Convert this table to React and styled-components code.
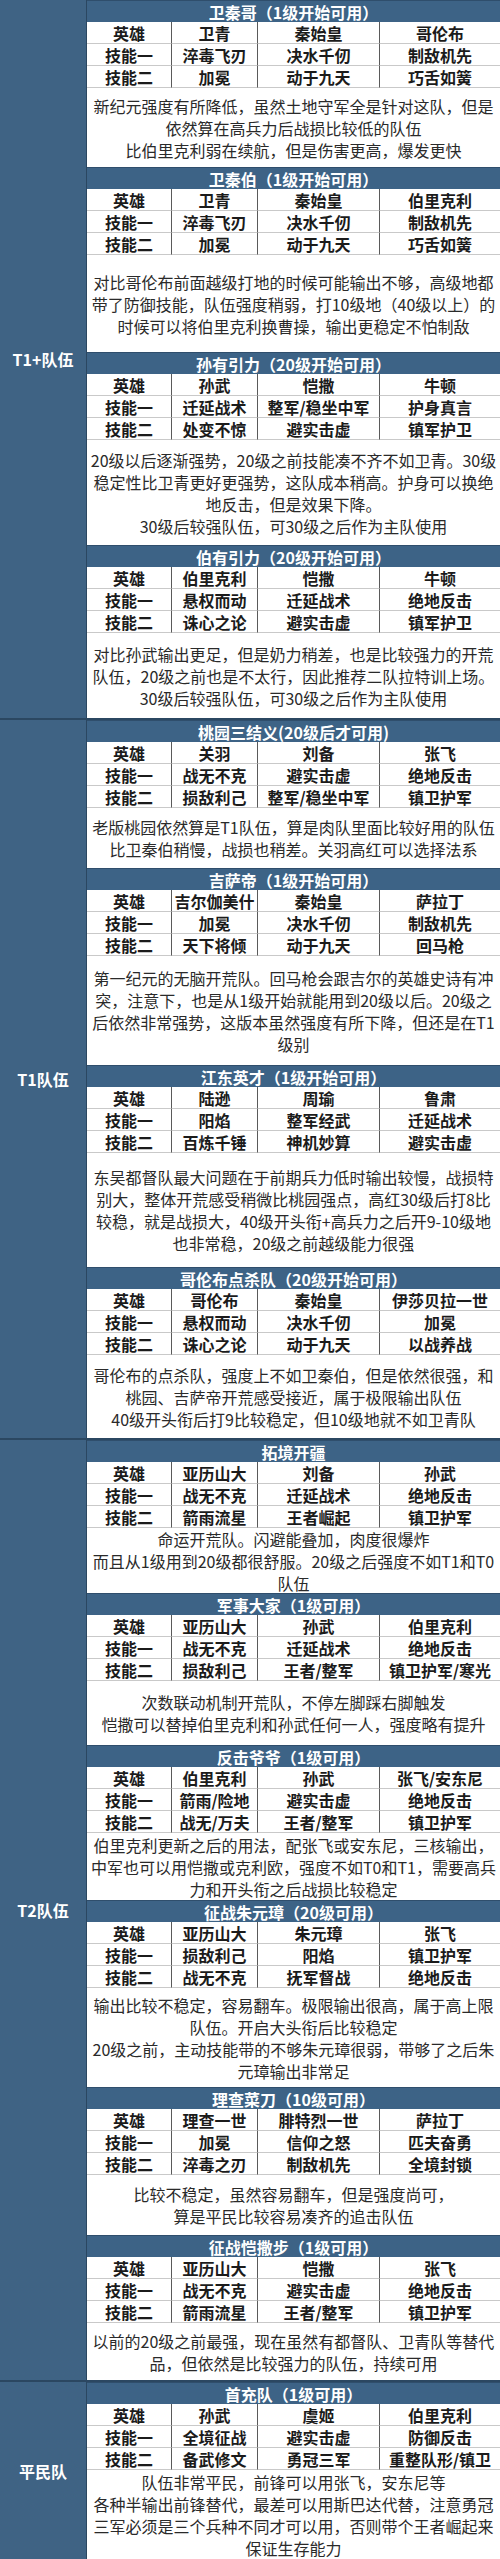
import React from 'react';
import styled, { createGlobalStyle } from 'styled-components';

const GlobalStyle = createGlobalStyle`
  *, *::before, *::after { box-sizing: border-box; }
  html, body { margin: 0; padding: 0; background: #ffffff; }
  body { font-family: "Noto Sans CJK SC", "Noto Sans", sans-serif; }
`;

const Page = styled.div`
  width: 500px;
  display: flex;
  flex-direction: column;
`;

const Group = styled.section`
  display: grid;
  grid-template-columns: 87px 1fr;
  border-top: ${(p) => (p.$first ? 'none' : '2px solid #2b4761')};
`;

const GroupLabel = styled.div`
  background: #3f6384;
  border-right: 1px solid #2b4761;
  color: #ffffff;
  font-weight: 700;
  font-size: 16px;
  line-height: 1;
  display: flex;
  align-items: center;
  justify-content: center;
  white-space: nowrap;
`;

const Blocks = styled.div`
  display: flex;
  flex-direction: column;
`;

const Block = styled.article`
  display: flex;
  flex-direction: column;
`;

const Title = styled.div`
  height: 22px;
  background: #3d6386;
  border-top: 1px solid #2f4e6c;
  color: #ffffff;
  font-weight: 700;
  font-size: 16px;
  line-height: 1;
  display: flex;
  align-items: center;
  justify-content: center;
  white-space: nowrap;
`;

const Table = styled.div`
  display: grid;
  grid-template-columns: 85px 86px 122px 120px;
  grid-auto-rows: 22px;
`;

const Cell = styled.div`
  display: flex;
  align-items: center;
  justify-content: center;
  background: #ffffff;
  color: #1b1b1b;
  font-weight: 700;
  font-size: 16px;
  line-height: 1;
  white-space: nowrap;
  border-bottom: 1px solid #c9c9c9;
  border-right: ${(p) => (p.$last ? 'none' : '1px solid #5a5a5a')};
`;

const Desc = styled.div`
  height: ${(p) => p.$h}px;
  background: #ffffff;
  display: flex;
  flex-direction: column;
  align-items: center;
  justify-content: center;
  color: #2a2a2a;
  font-size: 16px;
  line-height: 22px;
`;

const Line = styled.span`
  white-space: nowrap;
`;

const ROW_LABELS = ['英雄', '技能一', '技能二'];

const groups = [
  {
    label: 'T1+队伍',
    blocks: [
      {
        title: '卫秦哥（1级开始可用）',
        rows: [
          ['卫青', '秦始皇', '哥伦布'],
          ['淬毒飞刃', '决水千仞', '制敌机先'],
          ['加冕', '动于九天', '巧舌如簧'],
        ],
        h: 79,
        desc: [
          '新纪元强度有所降低，虽然土地守军全是针对这队，但是',
          '依然算在高兵力后战损比较低的队伍',
          '比伯里克利弱在续航，但是伤害更高，爆发更快',
        ],
      },
      {
        title: '卫秦伯（1级开始可用）',
        rows: [
          ['卫青', '秦始皇', '伯里克利'],
          ['淬毒飞刃', '决水千仞', '制敌机先'],
          ['加冕', '动于九天', '巧舌如簧'],
        ],
        h: 97,
        desc: [
          '对比哥伦布前面越级打地的时候可能输出不够，高级地都',
          '带了防御技能，队伍强度稍弱，打10级地（40级以上）的',
          '时候可以将伯里克利换曹操，输出更稳定不怕制敌',
        ],
      },
      {
        title: '孙有引力（20级开始可用）',
        rows: [
          ['孙武', '恺撒', '牛顿'],
          ['迁延战术', '整军/稳坐中军', '护身真言'],
          ['处变不惊', '避实击虚', '镇军护卫'],
        ],
        h: 105,
        desc: [
          '20级以后逐渐强势，20级之前技能凑不齐不如卫青。30级',
          '稳定性比卫青更好更强势，这队成本稍高。护身可以换绝',
          '地反击，但是效果下降。',
          '30级后较强队伍，可30级之后作为主队使用',
        ],
      },
      {
        title: '伯有引力（20级开始可用）',
        rows: [
          ['伯里克利', '恺撒', '牛顿'],
          ['悬权而动', '迁延战术', '绝地反击'],
          ['诛心之论', '避实击虚', '镇军护卫'],
        ],
        h: 85,
        desc: [
          '对比孙武输出更足，但是奶力稍差，也是比较强力的开荒',
          '队伍，20级之前也是不太行，因此推荐二队拉特训上场。',
          '30级后较强队伍，可30级之后作为主队使用',
        ],
      },
    ],
  },
  {
    label: 'T1队伍',
    blocks: [
      {
        title: '桃园三结义(20级后才可用)',
        rows: [
          ['关羽', '刘备', '张飞'],
          ['战无不克', '避实击虚', '绝地反击'],
          ['损敌利己', '整军/稳坐中军', '镇卫护军'],
        ],
        h: 60,
        desc: [
          '老版桃园依然算是T1队伍，算是肉队里面比较好用的队伍',
          '比卫秦伯稍慢，战损也稍差。关羽高红可以选择法系',
        ],
      },
      {
        title: '吉萨帝（1级开始可用）',
        rows: [
          ['吉尔伽美什', '秦始皇', '萨拉丁'],
          ['加冕', '决水千仞', '制敌机先'],
          ['天下将倾', '动于九天', '回马枪'],
        ],
        h: 109,
        desc: [
          '第一纪元的无脑开荒队。回马枪会跟吉尔的英雄史诗有冲',
          '突，注意下，也是从1级开始就能用到20级以后。20级之',
          '后依然非常强势，这版本虽然强度有所下降，但还是在T1',
          '级别',
        ],
      },
      {
        title: '江东英才（1级开始可用）',
        rows: [
          ['陆逊', '周瑜', '鲁肃'],
          ['阳焰', '整军经武', '迁延战术'],
          ['百炼千锤', '神机妙算', '避实击虚'],
        ],
        h: 114,
        desc: [
          '东吴都督队最大问题在于前期兵力低时输出较慢，战损特',
          '别大，整体开荒感受稍微比桃园强点，高红30级后打8比',
          '较稳，就是战损大，40级开头衔+高兵力之后开9-10级地',
          '也非常稳，20级之前越级能力很强',
        ],
      },
      {
        title: '哥伦布点杀队（20级开始可用）',
        rows: [
          ['哥伦布', '秦始皇', '伊莎贝拉一世'],
          ['悬权而动', '决水千仞', '加冕'],
          ['诛心之论', '动于九天', '以战养战'],
        ],
        h: 83,
        desc: [
          '哥伦布的点杀队，强度上不如卫秦伯，但是依然很强，和',
          '桃园、吉萨帝开荒感受接近，属于极限输出队伍',
          '40级开头衔后打9比较稳定，但10级地就不如卫青队',
        ],
      },
    ],
  },
  {
    label: 'T2队伍',
    blocks: [
      {
        title: '拓境开疆',
        rows: [
          ['亚历山大', '刘备', '孙武'],
          ['战无不克', '迁延战术', '绝地反击'],
          ['箭雨流星', '王者崛起', '镇卫护军'],
        ],
        h: 65,
        desc: [
          '命运开荒队。闪避能叠加，肉度很爆炸',
          '而且从1级用到20级都很舒服。20级之后强度不如T1和T0',
          '队伍',
        ],
      },
      {
        title: '军事大家（1级可用）',
        rows: [
          ['亚历山大', '孙武', '伯里克利'],
          ['战无不克', '迁延战术', '绝地反击'],
          ['损敌利己', '王者/整军', '镇卫护军/寒光'],
        ],
        h: 64,
        desc: [
          '次数联动机制开荒队，不停左脚踩右脚触发',
          '恺撒可以替掉伯里克利和孙武任何一人，强度略有提升',
        ],
      },
      {
        title: '反击爷爷（1级可用）',
        rows: [
          ['伯里克利', '孙武', '张飞/安东尼'],
          ['箭雨/险地', '避实击虚', '绝地反击'],
          ['战无/万夫', '王者/整军', '镇卫护军'],
        ],
        h: 67,
        desc: [
          '伯里克利更新之后的用法，配张飞或安东尼，三核输出，',
          '中军也可以用恺撒或克利欧，强度不如T0和T1，需要高兵',
          '力和开头衔之后战损比较稳定',
        ],
      },
      {
        title: '征战朱元璋（20级可用）',
        rows: [
          ['亚历山大', '朱元璋', '张飞'],
          ['损敌利己', '阳焰', '镇卫护军'],
          ['战无不克', '抚军督战', '绝地反击'],
        ],
        h: 99,
        desc: [
          '输出比较不稳定，容易翻车。极限输出很高，属于高上限',
          '队伍。开启大头衔后比较稳定',
          '20级之前，主动技能带的不够朱元璋很弱，带够了之后朱',
          '元璋输出非常足',
        ],
      },
      {
        title: '理查菜刀（10级可用）',
        rows: [
          ['理查一世', '腓特烈一世', '萨拉丁'],
          ['加冕', '信仰之怒', '匹夫奋勇'],
          ['淬毒之刃', '制敌机先', '全境封锁'],
        ],
        h: 60,
        desc: [
          '比较不稳定，虽然容易翻车，但是强度尚可，',
          '算是平民比较容易凑齐的追击队伍',
        ],
      },
      {
        title: '征战恺撒步（1级可用）',
        rows: [
          ['亚历山大', '恺撒', '张飞'],
          ['战无不克', '避实击虚', '绝地反击'],
          ['箭雨流星', '王者/整军', '镇卫护军'],
        ],
        h: 57,
        desc: [
          '以前的20级之前最强，现在虽然有都督队、卫青队等替代',
          '品，但依然是比较强力的队伍，持续可用',
        ],
      },
    ],
  },
  {
    label: '平民队',
    blocks: [
      {
        title: '首充队（1级可用）',
        rows: [
          ['孙武', '虞姬', '伯里克利'],
          ['全境征战', '避实击虚', '防御反击'],
          ['备武修文', '勇冠三军', '重整队形/镇卫'],
        ],
        h: 89,
        desc: [
          '队伍非常平民，前锋可以用张飞，安东尼等',
          '各种半输出前锋替代，最差可以用斯巴达代替，注意勇冠',
          '三军必须是三个兵种不同才可以用，否则带个王者崛起来',
          '保证生存能力',
        ],
      },
    ],
  },
];

function TeamBlock({ block }) {
  return (
    <Block>
      <Title>{block.title}</Title>
      <Table>
        {block.rows.map((row, ri) => (
          <React.Fragment key={ri}>
            <Cell>{ROW_LABELS[ri]}</Cell>
            {row.map((v, ci) => (
              <Cell key={ci} $last={ci === row.length - 1}>
                {v}
              </Cell>
            ))}
          </React.Fragment>
        ))}
      </Table>
      <Desc $h={block.h}>
        {block.desc.map((l, i) => (
          <Line key={i}>{l}</Line>
        ))}
      </Desc>
    </Block>
  );
}

export default function App() {
  return (
    <>
      <GlobalStyle />
      <Page>
        {groups.map((g, gi) => (
          <Group key={g.label} $first={gi === 0}>
            <GroupLabel>{g.label}</GroupLabel>
            <Blocks>
              {g.blocks.map((b) => (
                <TeamBlock key={b.title} block={b} />
              ))}
            </Blocks>
          </Group>
        ))}
      </Page>
    </>
  );
}
